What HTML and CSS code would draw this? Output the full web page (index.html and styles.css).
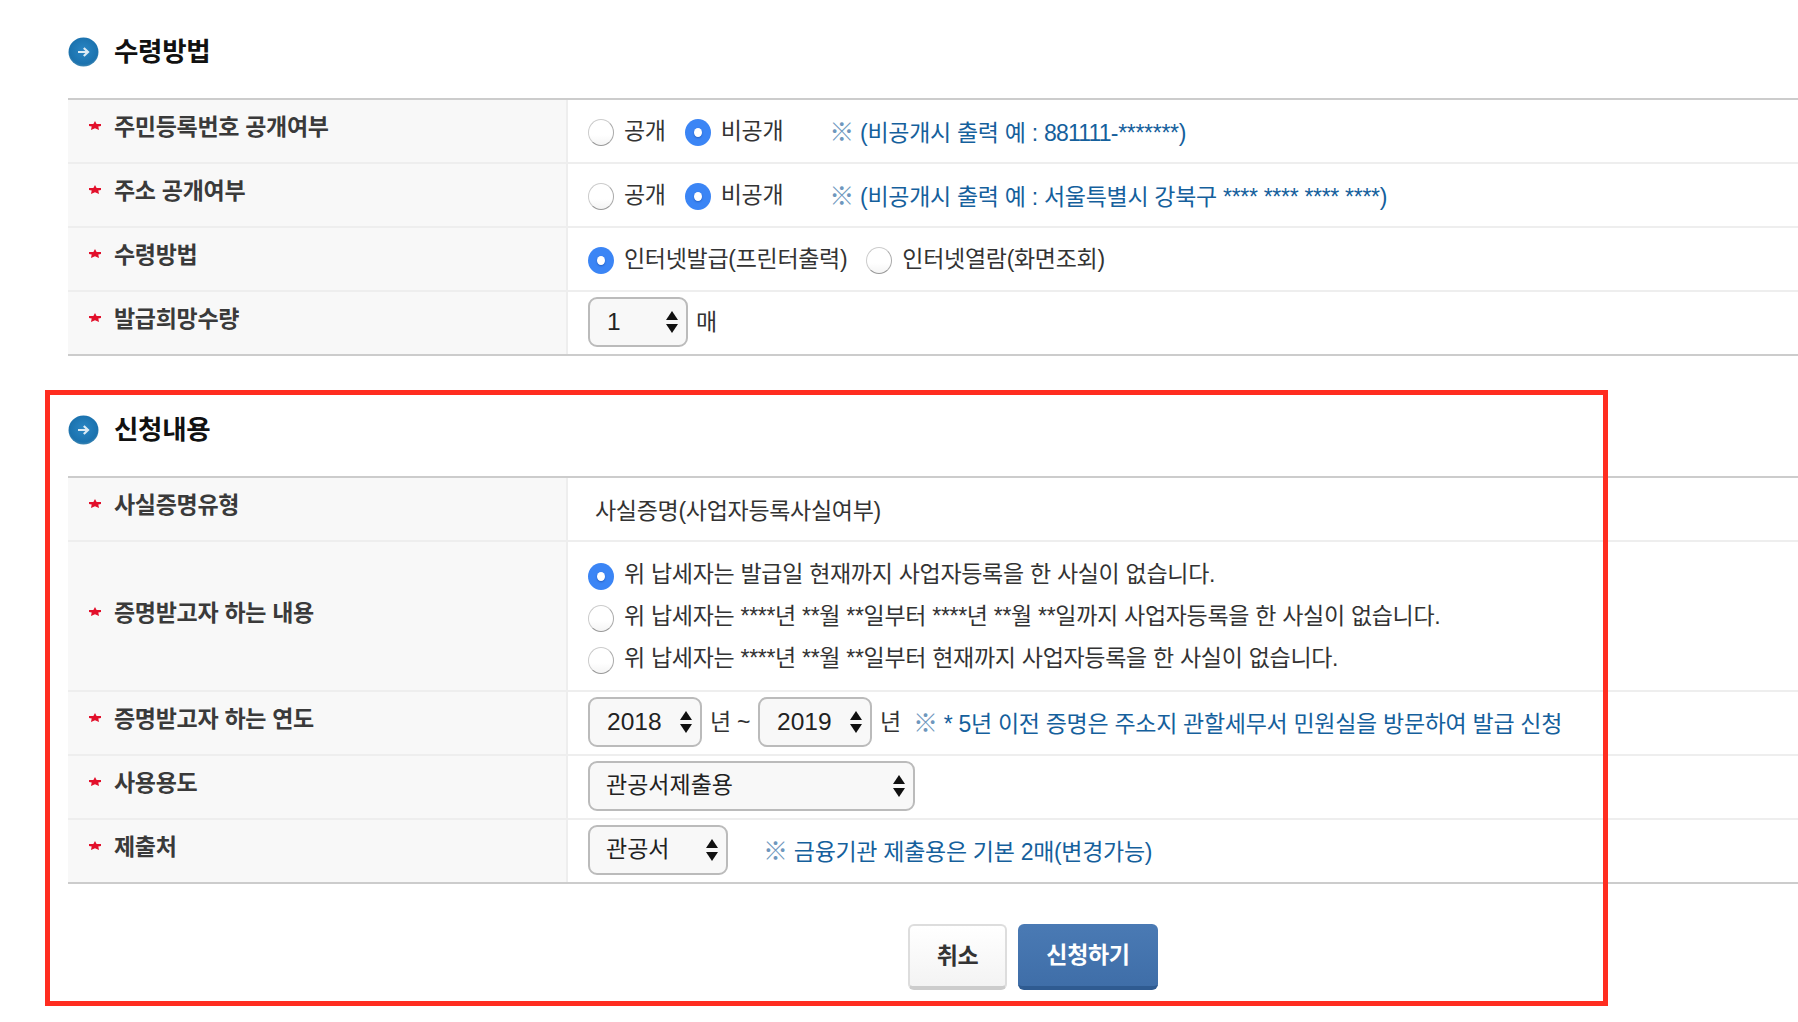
FILE: index.html
```html
<!DOCTYPE html>
<html lang="ko">
<head>
  <meta charset="UTF-8">
  <meta name="viewport" content="width=device-width, initial-scale=1.0">
  <title>수령방법 / 신청내용</title>
  <link rel="stylesheet" href="styles.css">
</head>
<body>

<svg class="defs" width="0" height="0" aria-hidden="true">
  <defs>
    <radialGradient id="bulletFill" cx="50%" cy="45%" r="55%">
      <stop offset="0%" stop-color="#2a86c4"/>
      <stop offset="85%" stop-color="#1b72ae"/>
      <stop offset="100%" stop-color="#3f87b3"/>
    </radialGradient>
    <symbol id="bullet" viewBox="0 0 31 30">
      <ellipse cx="15.5" cy="15" rx="15" ry="14.5" fill="url(#bulletFill)"/>
      <path d="M10 15h10M15.8 11l4.2 4-4.2 4" fill="none" stroke="#dcebf5" stroke-width="2.2"/>
    </symbol>
    <symbol id="star" viewBox="0 0 12 9">
      <path d="M6 0l1.6 3H12v2L9.3 5.6 10 9 6 7.2 2 9l.7-3.4L0 5V3h4.4z" fill="#e2102b"/>
    </symbol>
  </defs>
</svg>

<!-- 수령방법 -->
<section class="section">
  <h2 class="section-title"><svg class="bullet"><use href="#bullet"/></svg>수령방법</h2>
  <div class="form-table">
    <div class="form-row">
      <div class="form-label"><svg class="star"><use href="#star"/></svg>주민등록번호 공개여부</div>
      <div class="form-value">
        <label class="radio"><input type="radio" name="rrn"><span>공개</span></label>
        <label class="radio"><input type="radio" name="rrn" checked><span>비공개</span></label>
        <span class="note note-wide"><span class="mark">※</span> (비공개시 출력 예 : <span class="digits">881111</span>-*******)</span>
      </div>
    </div>
    <div class="form-row">
      <div class="form-label"><svg class="star"><use href="#star"/></svg>주소 공개여부</div>
      <div class="form-value">
        <label class="radio"><input type="radio" name="addr"><span>공개</span></label>
        <label class="radio"><input type="radio" name="addr" checked><span>비공개</span></label>
        <span class="note note-wide"><span class="mark">※</span> (비공개시 출력 예 : 서울특별시 강북구 **** **** **** ****)</span>
      </div>
    </div>
    <div class="form-row">
      <div class="form-label"><svg class="star"><use href="#star"/></svg>수령방법</div>
      <div class="form-value">
        <label class="radio"><input type="radio" name="recv" checked><span>인터넷발급(프린터출력)</span></label>
        <label class="radio"><input type="radio" name="recv"><span>인터넷열람(화면조회)</span></label>
      </div>
    </div>
    <div class="form-row">
      <div class="form-label"><svg class="star"><use href="#star"/></svg>발급희망수량</div>
      <div class="form-value tight">
        <span class="select select-qty"><select><option>1</option></select></span>
        <span class="unit">매</span>
      </div>
    </div>
  </div>
</section>

<!-- 신청내용 -->
<section class="section">
  <h2 class="section-title"><svg class="bullet"><use href="#bullet"/></svg>신청내용</h2>
  <div class="form-table">
    <div class="form-row">
      <div class="form-label"><svg class="star"><use href="#star"/></svg>사실증명유형</div>
      <div class="form-value plain">사실증명(사업자등록사실여부)</div>
    </div>
    <div class="form-row">
      <div class="form-label form-label-mid"><svg class="star"><use href="#star"/></svg>증명받고자 하는 내용</div>
      <div class="form-value stacked">
        <label class="radio"><input type="radio" name="content" checked><span>위 납세자는 발급일 현재까지 사업자등록을 한 사실이 없습니다.</span></label>
        <label class="radio"><input type="radio" name="content"><span>위 납세자는 ****년 **월 **일부터 ****년 **월 **일까지 사업자등록을 한 사실이 없습니다.</span></label>
        <label class="radio"><input type="radio" name="content"><span>위 납세자는 ****년 **월 **일부터 현재까지 사업자등록을 한 사실이 없습니다.</span></label>
      </div>
    </div>
    <div class="form-row">
      <div class="form-label"><svg class="star"><use href="#star"/></svg>증명받고자 하는 연도</div>
      <div class="form-value tight">
        <span class="select select-year"><select><option>2018</option></select></span>
        <span class="unit">년 ~</span>
        <span class="select select-year"><select><option>2019</option></select></span>
        <span class="unit">년</span>
        <span class="note"><span class="mark">※</span> * 5년 이전 증명은 주소지 관할세무서 민원실을 방문하여 발급 신청</span>
      </div>
    </div>
    <div class="form-row">
      <div class="form-label"><svg class="star"><use href="#star"/></svg>사용용도</div>
      <div class="form-value tight">
        <span class="select select-use"><select><option>관공서제출용</option></select></span>
      </div>
    </div>
    <div class="form-row">
      <div class="form-label"><svg class="star"><use href="#star"/></svg>제출처</div>
      <div class="form-value tight">
        <span class="select select-dest"><select><option>관공서</option></select></span>
        <span class="note note-dest"><span class="mark">※</span> 금융기관 제출용은 기본 2매(변경가능)</span>
      </div>
    </div>
  </div>
  <div class="buttons">
    <button class="btn btn-cancel" type="button">취소</button>
    <button class="btn btn-submit" type="button">신청하기</button>
  </div>
</section>

<!-- Red annotation box drawn over the screenshot -->
<div class="highlight"></div>

</body>
</html>
```

FILE: styles.css
```css
body {
  font-family: "Liberation Sans", "Noto Sans CJK KR", sans-serif;
  color: #333;
  background: #fff;
  margin: 0;
  padding: 0 0 0 68px;
  height: 1022px;
  overflow: hidden;
  position: relative;
}
.defs {
  position: absolute;
}
.section {
  margin-bottom: 22px;
}
.section-title {
  display: flex;
  align-items: center;
  gap: 15px;
  height: 98px;
  box-sizing: border-box;
  margin: 0;
  font-size: 26.5px;
  font-weight: 700;
  letter-spacing: -0.3px;
  color: #111;
}
.bullet {
  width: 31px;
  height: 30px;
  margin-top: 6px;
}
.form-table {
  border-top: 2px solid #ccc;
}
.form-row {
  display: grid;
  grid-template-columns: 498px 1fr;
  border-bottom: 2px solid #eee;
}
.form-row:last-child {
  border-bottom-color: #ccc;
}
.form-label {
  display: flex;
  align-items: center;
  background: #f8f8f8;
  border-right: 2px solid #eee;
  box-sizing: border-box;
  width: 500px;
  padding: 0 0 12px 21px;
  font-size: 23px;
  font-weight: 700;
  letter-spacing: -0.3px;
  color: #3a3a3a;
}
.form-label-mid {
  padding-bottom: 10px;
}
.star {
  width: 12px;
  height: 9px;
  margin-right: 13px;
}
.form-value {
  display: flex;
  align-items: center;
  gap: 19px;
  min-height: 62px;
  padding-left: 20px;
  margin-left: 2px;
  font-size: 23px;
  letter-spacing: -0.3px;
  white-space: nowrap;
}
.form-value.tight {
  gap: 8px;
}
.form-value.plain {
  padding-left: 27px;
}
.form-value.stacked {
  flex-direction: column;
  align-items: flex-start;
  gap: 3px;
  padding-top: 13px;
  padding-bottom: 12px;
}
.radio {
  display: inline-flex;
  align-items: center;
  gap: 10px;
}
.radio span {
  margin-bottom: 5px;
}
.radio input {
  appearance: none;
  -webkit-appearance: none;
  width: 26px;
  height: 27px;
  margin: 3px 0 0 0;
  border: 1px solid #ccc;
  border-bottom-color: #999;
  border-right-color: #aaa;
  border-radius: 50%;
  background: linear-gradient(#fff 60%, #f4f4f4);
  position: relative;
  box-sizing: border-box;
}
.radio input:checked {
  border: none;
  background: #3b85f5;
}
.radio input:checked::after {
  content: "";
  position: absolute;
  left: 9px;
  top: 9px;
  width: 8px;
  height: 9px;
  border-radius: 50%;
  background: #fff;
  box-shadow: 0 1px 2px rgba(0, 40, 120, 0.4);
}
.select {
  display: inline-block;
  position: relative;
  margin-bottom: 3px;
}
.select select {
  appearance: none;
  -webkit-appearance: none;
  display: block;
  width: 100%;
  height: 50px;
  margin: 0;
  padding: 0 0 2px 16px;
  box-sizing: border-box;
  border: 2px solid #bbb;
  border-radius: 9px;
  background: #f8f8f8;
  color: #222;
  font-family: "Liberation Sans", "Noto Sans CJK KR", sans-serif;
  font-size: 23px;
}
/* the two little select arrows */
.select::before,
.select::after {
  content: "";
  position: absolute;
  right: 10px;
  border-left: 6px solid transparent;
  border-right: 6px solid transparent;
}
.select::before {
  top: 14px;
  border-bottom: 9px solid #111;
}
.select::after {
  top: 27px;
  border-top: 9px solid #111;
}
.select-qty {
  width: 100px;
}
.select-year {
  width: 114px;
}
.select-year select,
.select-qty select {
  font-size: 24.5px;
  padding-bottom: 0;
  padding-left: 17px;
}
.select-use {
  width: 327px;
}
.select-dest {
  width: 140px;
}
.unit {
  margin-bottom: 7px;
}
.note {
  color: #15609c;
  margin: 0 0 4px 4px;
}
.mark {
  color: #6e97bd;
  font-size: 25px;
}
.digits {
  letter-spacing: -0.8px;
}
.note-wide {
  margin-left: 27px;
  margin-bottom: 2px;
}
.note-dest {
  margin-left: 27px;
}
.buttons {
  display: flex;
  gap: 11px;
  margin-top: 40px;
  padding-left: 840px;
}
.btn {
  height: 66px;
  box-sizing: border-box;
  font-family: inherit;
  font-size: 23px;
  font-weight: 700;
  letter-spacing: -0.3px;
  border-radius: 6px;
  padding: 0 0 4px 0;
}
.btn-cancel {
  width: 99px;
  color: #333;
  background: linear-gradient(#fff, #f3f3f3);
  border: 2px solid #ddd;
  border-bottom: 4px solid #ccc;
}
.btn-submit {
  width: 140px;
  color: #fff;
  background: linear-gradient(#4a7ab4, #3f6ea8);
  border: none;
  border-bottom: 4px solid #2f5b91;
}
.highlight {
  position: absolute;
  left: 45px;
  top: 390px;
  width: 1563px;
  height: 616px;
  box-sizing: border-box;
  border: 5px solid #ff2d20;
}
```
